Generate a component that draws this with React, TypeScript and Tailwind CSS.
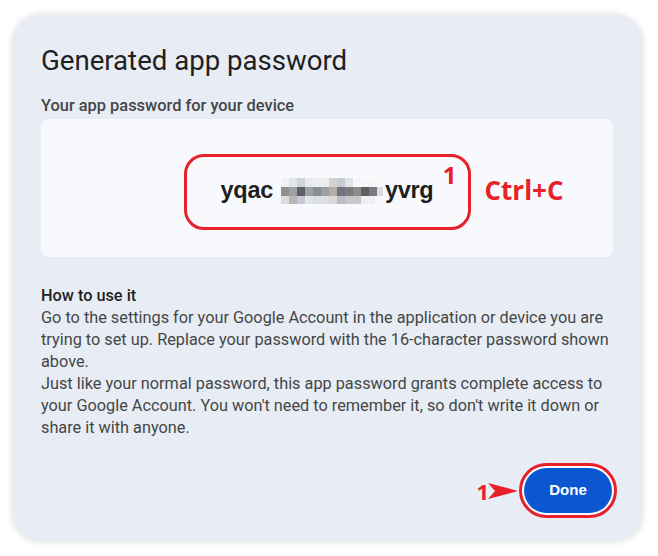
import React from "react";

export default function App() {
  return (
    <div className="w-[658px] h-[556px] bg-white pt-[16px] pl-[14px]" style={{ fontFamily: "Roboto, 'Liberation Sans', sans-serif" }}>
      <div className="w-[627px] h-[524px] rounded-[26px] bg-[#e8ecf4] shadow-[0_0_6px_2px_rgba(0,0,0,0.12)] pl-[27px] pr-[28px] pt-[26px] flex flex-col">
        <h1 className="text-[27.6px] leading-[38px] text-[#1f1f1f] font-normal">Generated app password</h1>
        <div className="mt-[16px] text-[16.4px] leading-[20px] font-medium text-[#444746]">Your app password for your device</div>
        <div className="mt-[3px] h-[138px] rounded-[8px] bg-[#f8f9fc] flex items-center justify-center relative">
          <div className="relative mt-[8px] w-[287px] h-[76px] rounded-[20px] border-[3px] border-[#e8202a] flex items-center justify-center">
            <span className="text-[23.5px] font-bold text-[#1f1f1f] tracking-[-0.3px] flex items-center mt-[-2px]" style={{ fontFamily: "'Liberation Sans', Arial, sans-serif" }}>
              yqac
              <span className="inline-flex ml-[8px] mr-[2px] h-[26px] items-center">
                <span className="flex flex-col w-[102px] h-[26px]">
                  <span className="flex h-[9px]">
                    <span className="w-[8px] bg-[#f2f2f4]" />
                    <span className="w-[8px] bg-[#e3e6ec]" />
                    <span className="w-[8px] bg-[#cfd3dc]" />
                    <span className="w-[8px] bg-[#e6e8ec]" />
                    <span className="w-[16px] bg-[#eceef2]" />
                    <span className="w-[8px] bg-[#d6d2cf]" />
                    <span className="w-[8px] bg-[#c5cad4]" />
                    <span className="w-[8px] bg-[#e0e2e6]" />
                    <span className="w-[30px] bg-[#f5f6f8]" />
                  </span>
                  <span className="flex h-[9px]">
                    <span className="w-[8px] bg-[#8f8f91]" />
                    <span className="w-[8px] bg-[#9ea0a4]" />
                    <span className="w-[8px] bg-[#5f6066]" />
                    <span className="w-[8px] bg-[#9aa0a8]" />
                    <span className="w-[8px] bg-[#8a8d92]" />
                    <span className="w-[8px] bg-[#9b9ea6]" />
                    <span className="w-[8px] bg-[#b5aca6]" />
                    <span className="w-[8px] bg-[#6f7480]" />
                    <span className="w-[8px] bg-[#7d7b78]" />
                    <span className="w-[8px] bg-[#8c8c8c]" />
                    <span className="w-[8px] bg-[#5e5e60]" />
                    <span className="w-[8px] bg-[#7a7a7c]" />
                    <span className="w-[6px] bg-[#d8dce4]" />
                  </span>
                  <span className="flex h-[8px]">
                    <span className="w-[8px] bg-[#dcdcdc]" />
                    <span className="w-[8px] bg-[#b9b6b4]" />
                    <span className="w-[8px] bg-[#c3cad6]" />
                    <span className="w-[8px] bg-[#e2e4e8]" />
                    <span className="w-[16px] bg-[#dcdfe4]" />
                    <span className="w-[8px] bg-[#ddd8d4]" />
                    <span className="w-[8px] bg-[#b8bcc4]" />
                    <span className="w-[16px] bg-[#c8c8ca]" />
                    <span className="w-[14px] bg-[#eeeff2]" />
                  </span>
                </span>
              </span>
              yvrg
            </span>
            <span className="absolute right-[11px] top-[4px] text-[24px] leading-[28px] font-bold text-[#e8202a]" style={{ fontFamily: "'Open Sans', sans-serif" }}>1</span>
            <span className="absolute left-[298px] top-[17px] whitespace-nowrap text-[26px] leading-[32px] font-bold text-[#e8202a]" style={{ fontFamily: "'Open Sans', sans-serif" }}>Ctrl+C</span>
          </div>
        </div>
        <div className="mt-[28px] text-[16.3px] leading-[22px] text-[#1f1f1f]">
          <div className="font-medium text-[#1f1f1f]">How to use it</div>
          <p className="text-[#444746]">
            Go to the settings for your Google Account in the application or device you are trying to set up. Replace your password with the 16-character password shown above.
          </p>
          <p className="text-[#444746]">
            Just like your normal password, this app password grants complete access to your Google Account. You won't need to remember it, so don't write it down or share it with anyone.
          </p>
        </div>
        <div className="mt-auto mb-[22px] flex justify-end items-center">
          <div className="flex items-center mr-[-4px]">
            <span className="text-[22px] leading-[24px] font-bold text-[#e8202a]" style={{ fontFamily: "'Open Sans', sans-serif" }}>1</span>
            <svg width="32" height="20" viewBox="0 0 32 20" className="ml-[-2px]">
              <path d="M1 2 L31 10 L1 18 L8 10 Z" fill="#e8202a" />
            </svg>
            <div className="rounded-full border-[3px] border-[#e8202a] p-[2px] bg-white">
              <button className="w-[88px] h-[45px] rounded-full bg-[#0b57d0] text-white text-[15px] font-bold" style={{ fontFamily: "'Liberation Sans', Arial, sans-serif" }}>Done</button>
            </div>
          </div>
        </div>
      </div>
    </div>
  );
}
